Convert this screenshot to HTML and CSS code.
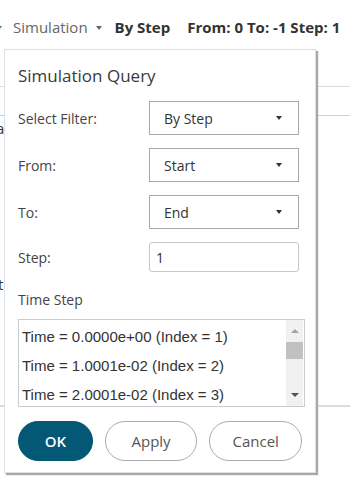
FILE: index.html
```html
<!DOCTYPE html>
<html>
<head>
<meta charset="utf-8">
<link rel="stylesheet" href="styles.css">
</head>
<body>
<div class="page">
  <div class="topbar">
    <span class="caret-sm first"></span>
    <span class="crumb">Simulation</span>
    <span class="caret-sm"></span>
    <span class="strong filter">By Step</span>
    <span class="strong">From: 0 To: -1 Step: 1</span>
  </div>
  <div class="bg">
    <div class="bg-row r1"></div>
    <div class="bg-row r2"></div>
    <div class="bg-row r3"><span class="ghost ghost-a">a</span></div>
    <div class="bg-row r4"><span class="ghost ghost-t">t</span></div>
    <div class="bg-row r5"></div>
  </div>

  <div class="dialog">
    <div class="title">Simulation Query</div>
    <div class="form-row">
      <label class="lbl">Select Filter:</label>
      <div class="select"><span>By Step</span><span class="caret"></span></div>
    </div>
    <div class="form-row">
      <label class="lbl">From:</label>
      <div class="select"><span>Start</span><span class="caret"></span></div>
    </div>
    <div class="form-row">
      <label class="lbl">To:</label>
      <div class="select"><span>End</span><span class="caret"></span></div>
    </div>
    <div class="form-row step-row">
      <label class="lbl">Step:</label>
      <div class="input">1</div>
    </div>
    <div class="section">Time Step</div>
    <div class="listbox">
      <div class="items">
        <div class="item">Time = 0.0000e+00 (Index = 1)</div>
        <div class="item">Time = 1.0001e-02 (Index = 2)</div>
        <div class="item">Time = 2.0001e-02 (Index = 3)</div>
        <div class="item">Time = 3.0001e-02 (Index = 4)</div>
      </div>
      <div class="scrollbar">
        <span class="sb-up"></span>
        <span class="sb-thumb"></span>
        <span class="sb-space"></span>
        <span class="sb-down"></span>
      </div>
    </div>
    <div class="buttons">
      <div class="btn primary">OK</div>
      <div class="btn">Apply</div>
      <div class="btn">Cancel</div>
    </div>
  </div>
</div>
</body>
</html>
```

FILE: styles.css
```css
* { box-sizing: border-box; }
html, body { margin: 0; padding: 0; background: #fff; }
body {
  font-family: "Open Sans", "Noto Sans", sans-serif;
  color: #333;
  width: 350px;
  height: 496px;
  overflow: hidden;
}
.page { position: relative; width: 350px; height: 496px; }

.topbar {
  height: 50px;
  display: flex;
  align-items: center;
  font-size: 15px;
  white-space: nowrap;
  padding-top: 4px;
}
.caret-sm {
  display: inline-block;
  width: 0; height: 0;
  border-left: 3.5px solid transparent;
  border-right: 3.5px solid transparent;
  border-top: 4px solid #666;
  margin: 2px 8px 0 8px;
}
.caret-sm.first { margin-left: -4px; margin-right: 11px; }
.crumb { color: #666; }
.strong { font-weight: 700; color: #333; }
.filter { margin-left: 5px; margin-right: 17px; }

.bg { position: relative; }
.bg-row { border-bottom: 1px solid #dcdcdc; position: relative; }
.r1 { height: 37px; }
.r2 { height: 29px; border-bottom-color: #cfcfcf; }
.r3 { height: 100px; border-bottom: none; }
.r4 { height: 190px; }
.ghost { position: absolute; font-size: 15px; color: #333; }
.ghost-a { left: -4px; top: 2px; }
.ghost-t { left: -2px; top: 58px; }

.dialog {
  position: absolute;
  left: 4px;
  top: 49px;
  width: 312px;
  height: 424px;
  background: #fff;
  border: 1px solid #d8e0e8;
  box-shadow: 2px 2px 1px #a8a8a8;
  padding: 0 13px;
}
.title {
  font-size: 17px;
  color: #3a3a3a;
  height: 51px;
  line-height: 51px;
}
.form-row {
  display: flex;
  align-items: center;
  height: 34px;
  margin-bottom: 13px;
}
.lbl { width: 131px; font-size: 14px; color: #444; }
.select {
  width: 150px;
  height: 34px;
  border: 1px solid #a9a9a9;
  display: flex;
  align-items: center;
  justify-content: space-between;
  padding: 0 16px 0 14px;
  font-size: 14px;
  color: #333;
}
.caret {
  width: 0; height: 0;
  border-left: 3.5px solid transparent;
  border-right: 3.5px solid transparent;
  border-top: 4px solid #333;
}
.step-row { height: 30px; margin-bottom: 0; }
.input {
  width: 150px;
  height: 30px;
  border: 1px solid #c8c8c8;
  border-radius: 3px;
  padding: 0 6px;
  display: flex;
  align-items: center;
  font-size: 14px;
  color: #333;
}
.section {
  font-size: 14px;
  color: #444;
  margin-top: 18px;
  line-height: 20px;
  margin-bottom: 9px;
}
.listbox {
  width: 287px;
  height: 88px;
  border: 1px solid #c6cdd3;
  display: flex;
  overflow: hidden;
}
.items { flex: 1; overflow: hidden; padding-top: 2px; }
.item {
  height: 29px;
  line-height: 29px;
  padding-left: 3px;
  font-family: "Liberation Sans", Arial, sans-serif;
  font-size: 15px;
  color: #333;
  white-space: nowrap;
}
.scrollbar {
  width: 17px;
  background: #f1f1f1;
  display: flex;
  flex-direction: column;
  align-items: center;
  margin-right: 1px;
}
.sb-up {
  margin-top: 9px;
  width: 0; height: 0;
  border-left: 4px solid transparent;
  border-right: 4px solid transparent;
  border-bottom: 4px solid #a3a3a3;
}
.sb-thumb {
  margin-top: 9px;
  width: 17px;
  height: 17px;
  background: #c1c1c1;
}
.sb-space { flex: 1; }
.sb-down {
  margin-bottom: 9px;
  width: 0; height: 0;
  border-left: 4px solid transparent;
  border-right: 4px solid transparent;
  border-top: 4px solid #505050;
}
.buttons {
  display: flex;
  gap: 12px;
  margin-top: 14px;
}
.btn {
  height: 40px;
  width: 93px;
  border-radius: 20px;
  border: 1px solid #aaa;
  background: #fff;
  font-size: 15px;
  color: #555;
  display: flex;
  align-items: center;
  justify-content: center;
}
.btn.primary {
  width: 75px;
  background: #035876;
  border-color: #035876;
  color: #fff;
  font-weight: 600;
}
```
